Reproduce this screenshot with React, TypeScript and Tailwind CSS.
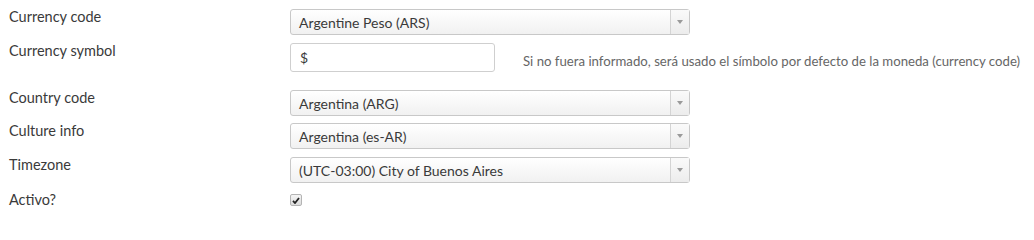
const font = { fontFamily: "Lato, 'Open Sans', sans-serif" };

function Select({ value }: { value: string }) {
  return (
    <div className="flex h-[26px] w-[400px] rounded-[3px] border border-[#c8c8c8] bg-gradient-to-b from-white to-[#f1f1f1] text-[14px] text-[#3a3a3a]">
      <div className="flex flex-1 items-center pl-[8px]">{value}</div>
      <div className="flex w-[19px] items-center justify-center border-l border-[#d4d4d4] bg-gradient-to-b from-[#fafafa] to-[#ececec]">
        <svg width="6" height="4" viewBox="0 0 6 4">
          <path d="M0 0h6L3 4z" fill="#9a9a9a" />
        </svg>
      </div>
    </div>
  );
}

function Label({ children }: { children: React.ReactNode }) {
  return (
    <div className="w-[290px] shrink-0 pl-[9px] pt-[1px] text-[14.5px] leading-[14px] text-[#3a3a3a]">
      {children}
    </div>
  );
}

export default function App() {
  return (
    <div className="w-[1034px] h-[212px] bg-white pt-[9px]" style={font}>
      <div className="flex mb-[8px]">
        <Label>Currency code</Label>
        <Select value="Argentine Peso (ARS)" />
      </div>
      <div className="flex mb-[18px]">
        <Label>Currency symbol</Label>
        <div className="flex h-[29px] w-[205px] items-center rounded-[3px] border border-[#cfcfcf] bg-white pl-[9px] text-[14px] text-[#3a3a3a]">
          $
        </div>
        <div className="ml-[28px] self-end text-[13.2px] text-[#666]">
          Si no fuera informado, será usado el símbolo por defecto de la moneda (currency code)
        </div>
      </div>
      <div className="flex mb-[7px]">
        <Label>Country code</Label>
        <Select value="Argentina (ARG)" />
      </div>
      <div className="flex mb-[8px]">
        <Label>Culture info</Label>
        <Select value="Argentina (es-AR)" />
      </div>
      <div className="flex mb-[9px]">
        <Label>Timezone</Label>
        <Select value="(UTC-03:00) City of Buenos Aires" />
      </div>
      <div className="flex items-center">
        <Label>Activo?</Label>
        <div className="mt-[1px] flex h-[12px] w-[12px] items-center justify-center rounded-[2px] border border-[#b4b4b4] bg-gradient-to-b from-[#f4f4f4] to-[#dcdcdc]">
          <svg width="8" height="7" viewBox="0 0 8 7">
            <path d="M1 3.8L3 6 7 1" fill="none" stroke="#222" strokeWidth="1.8" />
          </svg>
        </div>
      </div>
    </div>
  );
}
